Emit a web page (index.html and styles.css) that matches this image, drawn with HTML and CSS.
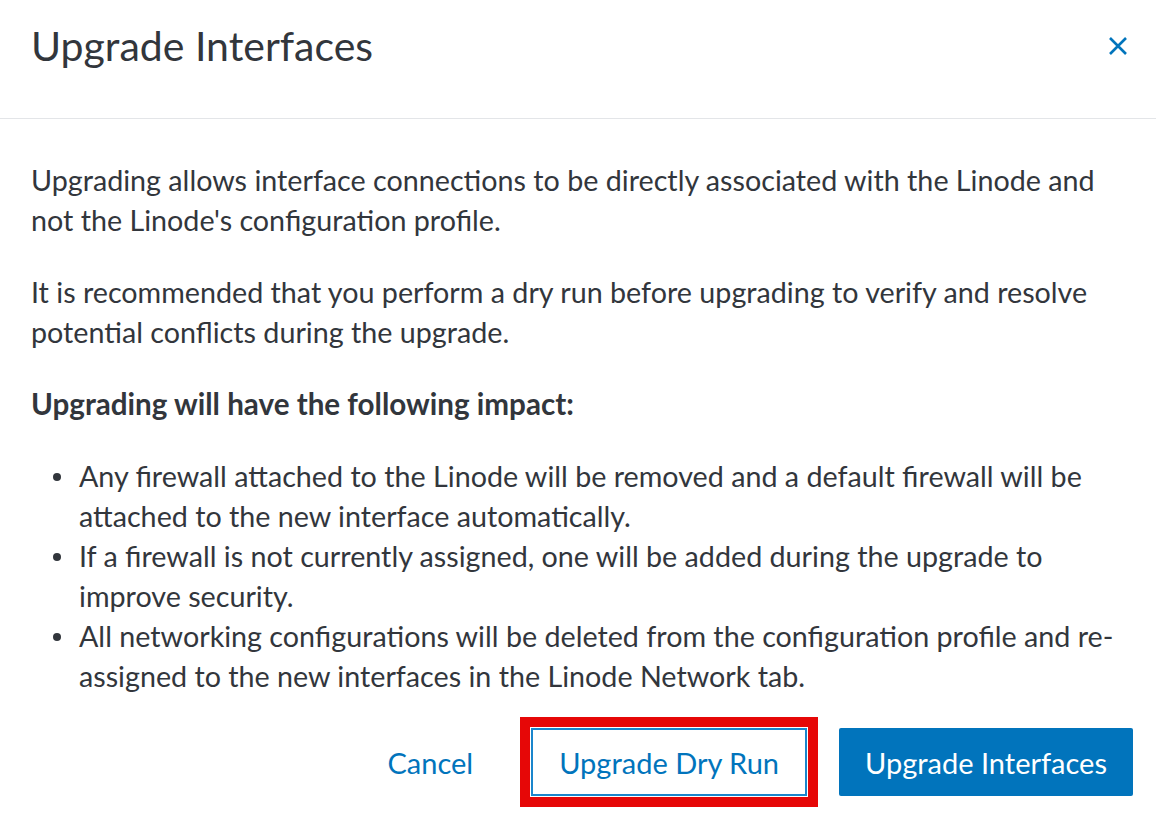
FILE: index.html
```html
<!DOCTYPE html>
<html lang="en">
<head>
<meta charset="utf-8">
<title>Upgrade Interfaces</title>
<link rel="stylesheet" href="styles.css">
</head>
<body>
<div class="dialog">
  <header class="dialog-header">
    <h2 class="dialog-title">Upgrade Interfaces</h2>
    <button class="close-btn" aria-label="Close">
      <svg width="20" height="20" viewBox="0 0 20 20" aria-hidden="true">
        <path d="M2 2 L18 18 M18 2 L2 18" stroke="#0174bc" stroke-width="2.6" fill="none" stroke-linecap="butt"/>
      </svg>
    </button>
  </header>
  <div class="dialog-body">
    <p class="text">Upgrading allows interface connections to be directly associated with the Linode and not the Linode's configuration profile.</p>
    <p class="text">It is recommended that you perform a dry run before upgrading to verify and resolve potential conflicts during the upgrade.</p>
    <p class="text strong">Upgrading will have the following impact:</p>
    <ul class="impact-list">
      <li>Any firewall attached to the Linode will be removed and a default firewall will be attached to the new interface automatically.</li>
      <li>If a firewall is not currently assigned, one will be added during the upgrade to improve security.</li>
      <li>All networking configurations will be deleted from the configuration profile and re-assigned to the new interfaces in the Linode Network tab.</li>
    </ul>
    <div class="actions">
      <button class="btn btn-text">Cancel</button>
      <button class="btn btn-outline highlighted">Upgrade Dry Run</button>
      <button class="btn btn-primary">Upgrade Interfaces</button>
    </div>
  </div>
</div>
</body>
</html>
```

FILE: styles.css
```css
* { box-sizing: border-box; }

html, body {
  margin: 0;
  padding: 0;
  background: #ffffff;
}

body {
  font-family: "Lato", "Noto Sans", sans-serif;
  color: #32363c;
}

.dialog {
  width: 1156px;
  height: 816px;
  background: #ffffff;
  overflow: hidden;
}

.dialog-header {
  height: 119px;
  border-bottom: 1px solid #e3e5e8;
  display: flex;
  align-items: center;
  justify-content: space-between;
  padding: 0 28px 26px 31px;
}

.dialog-title {
  margin: 0;
  font-size: 41px;
  font-weight: 400;
  line-height: 46px;
  color: #32363c;
}

.close-btn {
  border: 0;
  background: transparent;
  padding: 0;
  width: 20px;
  height: 20px;
  display: flex;
  cursor: pointer;
}

.dialog-body {
  padding: 41px 23px 20px 31px;
}

.text {
  margin: 0 0 32px;
  font-size: 28.7px;
  line-height: 40px;
}

.strong {
  font-weight: 700;
  font-size: 29.6px;
}

.impact-list {
  list-style: none;
  margin: 0 0 32px;
  padding: 0;
  font-size: 28.7px;
  line-height: 40px;
}

.impact-list li {
  display: flex;
  align-items: flex-start;
}

.impact-list li::before {
  content: "";
  flex: none;
  width: 8px;
  height: 8px;
  border-radius: 50%;
  background: #32363c;
  margin: 17px 18px 0 22px;
}

.actions {
  display: flex;
  justify-content: flex-end;
  gap: 32px;
}

.btn {
  height: 68px;
  padding: 0 26px;
  display: inline-flex;
  align-items: center;
  justify-content: center;
  font-family: "Lato", "Noto Sans", sans-serif;
  font-size: 29px;
  font-weight: 400;
  border-radius: 2px;
  cursor: pointer;
}

.btn-text {
  background: transparent;
  border: 0;
  color: #0174bc;
}

.btn-outline {
  background: #ffffff;
  border: 2px solid #1a86cc;
  color: #0174bc;
}

.btn-primary {
  background: #0174bc;
  border: 0;
  color: #ffffff;
}

.highlighted {
  border-radius: 0;
  outline: 10px solid #e60707;
  outline-offset: 1px;
}
```
